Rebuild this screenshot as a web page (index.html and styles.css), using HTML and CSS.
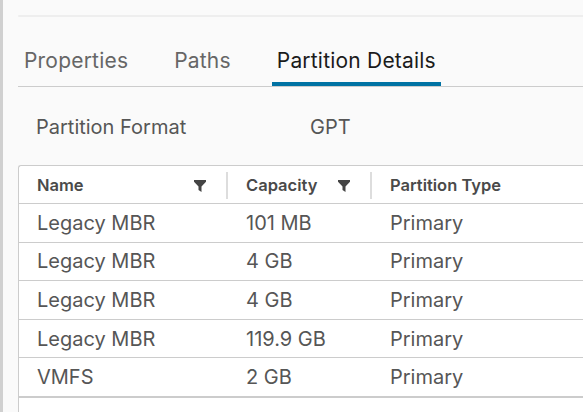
FILE: index.html
```html
<!DOCTYPE html>
<html lang="en">
<head>
    <meta charset="UTF-8">
    <meta name="viewport" content="width=device-width, initial-scale=1.0">
    <title>Partition Details</title>
    <link rel="stylesheet" href="styles.css">
</head>
<body>
    <div class="page">
        <div class="side-bar"></div>
        <main class="content">
            <div class="top-rule"></div>

            <nav class="tabs">
                <button class="tab">Properties</button>
                <button class="tab">Paths</button>
                <button class="tab active">Partition Details</button>
            </nav>

            <div class="detail-row">
                <span class="detail-label">Partition Format</span>
                <span class="detail-value">GPT</span>
            </div>

            <div class="grid">
                <div class="grid-row grid-head">
                    <div class="cell">
                        <span>Name</span>
                        <svg class="filter-icon" viewBox="0 0 12 12"><path d="M0 0H12V1.8L7.5 6.4V12L4.5 10V6.4L0 1.8Z"/></svg>
                        <span class="col-sep"></span>
                    </div>
                    <div class="cell">
                        <span>Capacity</span>
                        <svg class="filter-icon" viewBox="0 0 12 12"><path d="M0 0H12V1.8L7.5 6.4V12L4.5 10V6.4L0 1.8Z"/></svg>
                        <span class="col-sep"></span>
                    </div>
                    <div class="cell">
                        <span>Partition Type</span>
                    </div>
                </div>
                <div class="grid-row">
                    <div class="cell">Legacy MBR</div>
                    <div class="cell">101 MB</div>
                    <div class="cell">Primary</div>
                </div>
                <div class="grid-row">
                    <div class="cell">Legacy MBR</div>
                    <div class="cell">4 GB</div>
                    <div class="cell">Primary</div>
                </div>
                <div class="grid-row">
                    <div class="cell">Legacy MBR</div>
                    <div class="cell">4 GB</div>
                    <div class="cell">Primary</div>
                </div>
                <div class="grid-row">
                    <div class="cell">Legacy MBR</div>
                    <div class="cell">119.9 GB</div>
                    <div class="cell">Primary</div>
                </div>
                <div class="grid-row">
                    <div class="cell">VMFS</div>
                    <div class="cell">2 GB</div>
                    <div class="cell">Primary</div>
                </div>
                <div class="grid-foot"></div>
            </div>
        </main>
    </div>
</body>
</html>
```

FILE: styles.css
```css
body {
    margin: 0;
    font-family: Inter, "Noto Sans", sans-serif;
    background-color: #fafafa;
    color: #565656;
    overflow: hidden;
}
.page {
    display: flex;
    height: 412px;
}
.side-bar {
    width: 3px;
    flex-shrink: 0;
    background-color: #d0d0d0;
}
.content {
    flex: 1;
    padding-left: 15px;
    overflow: hidden;
}
.top-rule {
    height: 2px;
    margin-top: 15px;
    background-color: #eeeeee;
    border-radius: 1px 0 0 1px;
}
.tabs {
    display: flex;
    gap: 36px;
    margin-top: 32px;
    padding-left: 1px;
    border-bottom: 1px solid #cccccc;
}
.tab {
    font-family: inherit;
    font-size: 21px;
    letter-spacing: 0.2px;
    line-height: 24px;
    color: #666666;
    background: none;
    border: none;
    border-bottom: 4px solid transparent;
    padding: 0 5px 9px;
    margin: 0;
    cursor: pointer;
}
.tab.active {
    color: #1b1b1b;
    border-bottom-color: #0072a3;
}
.detail-row {
    display: flex;
    padding: 28px 0 0 18px;
    font-size: 20px;
    line-height: 24px;
}
.detail-label {
    width: 274px;
}
.grid {
    width: 700px;
    margin-top: 26px;
    background: white;
    border: 1px solid #cccccc;
    border-right: none;
    border-radius: 3px 0 0 0;
}
.grid-row {
    display: grid;
    grid-template-columns: 209px 144px 1fr;
    height: 38.6px;
    box-sizing: border-box;
    border-bottom: 1px solid #cccccc;
    font-size: 20px;
}
.grid-head {
    height: 38px;
    font-size: 16.5px;
    font-weight: 600;
    color: #4a4a4a;
}
.cell {
    display: flex;
    align-items: center;
    padding-left: 18px;
    position: relative;
}
.filter-icon {
    width: 12px;
    height: 12px;
    fill: #444444;
    margin-left: auto;
    margin-right: 22px;
    margin-top: 2px;
}
.col-sep {
    position: absolute;
    right: 0;
    top: 6px;
    bottom: 4px;
    width: 2px;
    background-color: #dddddd;
}
.grid-foot {
    height: 40px;
    border-top: 1px solid #cccccc;
}
```
